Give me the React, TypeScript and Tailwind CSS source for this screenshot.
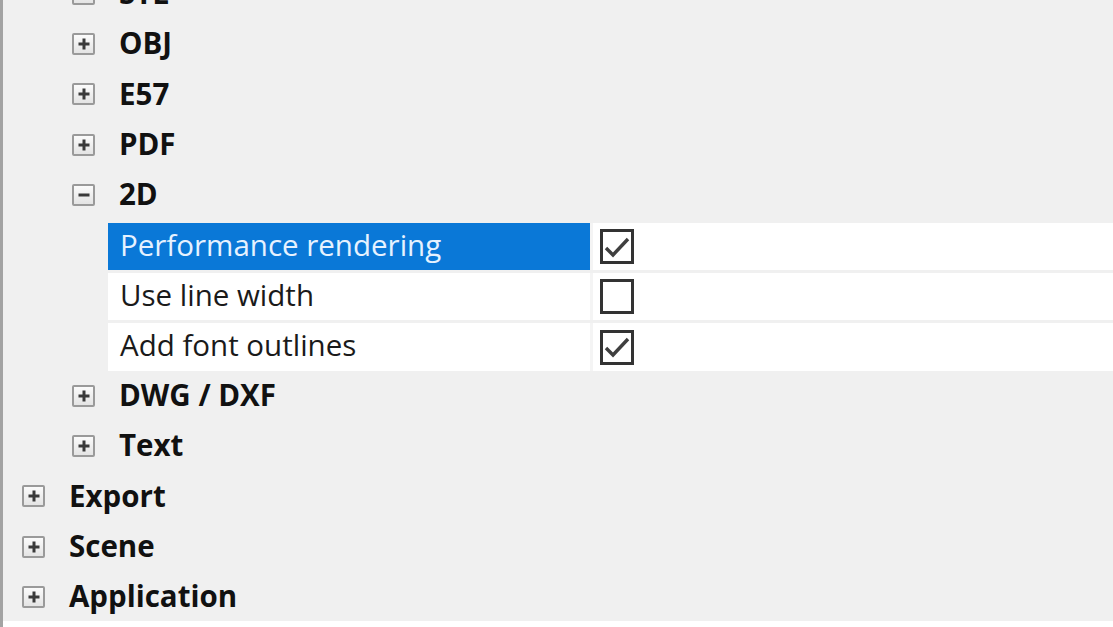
import React from "react";

type Node =
  | { kind: "group"; label: string; level: 1 | 2; open?: boolean }
  | { kind: "prop"; label: string; checked: boolean; selected?: boolean };

const rows: Node[] = [
  { kind: "group", label: "STL", level: 2 },
  { kind: "group", label: "OBJ", level: 2 },
  { kind: "group", label: "E57", level: 2 },
  { kind: "group", label: "PDF", level: 2 },
  { kind: "group", label: "2D", level: 2, open: true },
  { kind: "prop", label: "Performance rendering", checked: true, selected: true },
  { kind: "prop", label: "Use line width", checked: false },
  { kind: "prop", label: "Add font outlines", checked: true },
  { kind: "group", label: "DWG / DXF", level: 2 },
  { kind: "group", label: "Text", level: 2 },
  { kind: "group", label: "Export", level: 1 },
  { kind: "group", label: "Scene", level: 1 },
  { kind: "group", label: "Application", level: 1 },
];

function Expander({ open }: { open?: boolean }) {
  return (
    <div className="relative w-[23px] h-[22px] shrink-0 border-2 border-[#9a9a9a] rounded-[2px] bg-gradient-to-b from-[#fbfbfb] to-[#e4e4e4]">
      <div className="absolute left-1/2 top-1/2 w-[11px] h-[3px] -translate-x-1/2 -translate-y-1/2 bg-[#3a3a3a]" />
      {!open && (
        <div className="absolute left-1/2 top-1/2 w-[3px] h-[11px] -translate-x-1/2 -translate-y-1/2 bg-[#3a3a3a]" />
      )}
    </div>
  );
}

function CheckBox({ checked }: { checked: boolean }) {
  return (
    <div className="w-[34px] h-[35px] border-[3px] border-[#333333] bg-white flex items-center justify-center">
      {checked && (
        <svg width="28" height="28" viewBox="0 0 28 28">
          <path
            d="M3 15 L10 22 L25 6"
            fill="none"
            stroke="#3f3f3f"
            strokeWidth="3.4"
            strokeLinejoin="miter"
          />
        </svg>
      )}
    </div>
  );
}

export default function App() {
  return (
    <div
      className="w-[1113px] h-[627px] overflow-hidden bg-[#f0f0f0] border-l-[3px] border-[#a3a3a3]"
      style={{ fontFamily: '"Open Sans", "Noto Sans", sans-serif' }}
    >
      <div className="h-[621px] overflow-hidden">
        <div className="-mt-[31.35px]">
          {rows.map((r, i) =>
            r.kind === "group" ? (
              <div
                key={i}
                className={`h-[50.25px] flex items-center ${r.level === 1 ? "pl-[19px]" : "pl-[69px]"}`}
              >
                <Expander open={r.open} />
                <span className="ml-[24px] mb-[2px] text-[29.5px] leading-none font-bold text-[#111111]">
                  {r.label}
                </span>
              </div>
            ) : (
              <div key={i} className="h-[50.25px] pt-[3px] pl-[105px] flex">
                <div
                  className={`w-[482px] flex items-center pl-[12px] text-[29.5px] leading-none ${
                    r.selected ? "bg-[#0a78d7] text-[#e6f2ff]" : "bg-white text-[#1a1a1a]"
                  }`}
                >
                  <span className="mb-[4px]">{r.label}</span>
                </div>
                <div className="w-[3px] bg-[#f4f4f4]" />
                <div className="flex-1 bg-white flex items-center pl-[7px]">
                  <CheckBox checked={r.checked} />
                </div>
              </div>
            )
          )}
        </div>
      </div>
      <div className="h-[6px] bg-white" />
    </div>
  );
}
